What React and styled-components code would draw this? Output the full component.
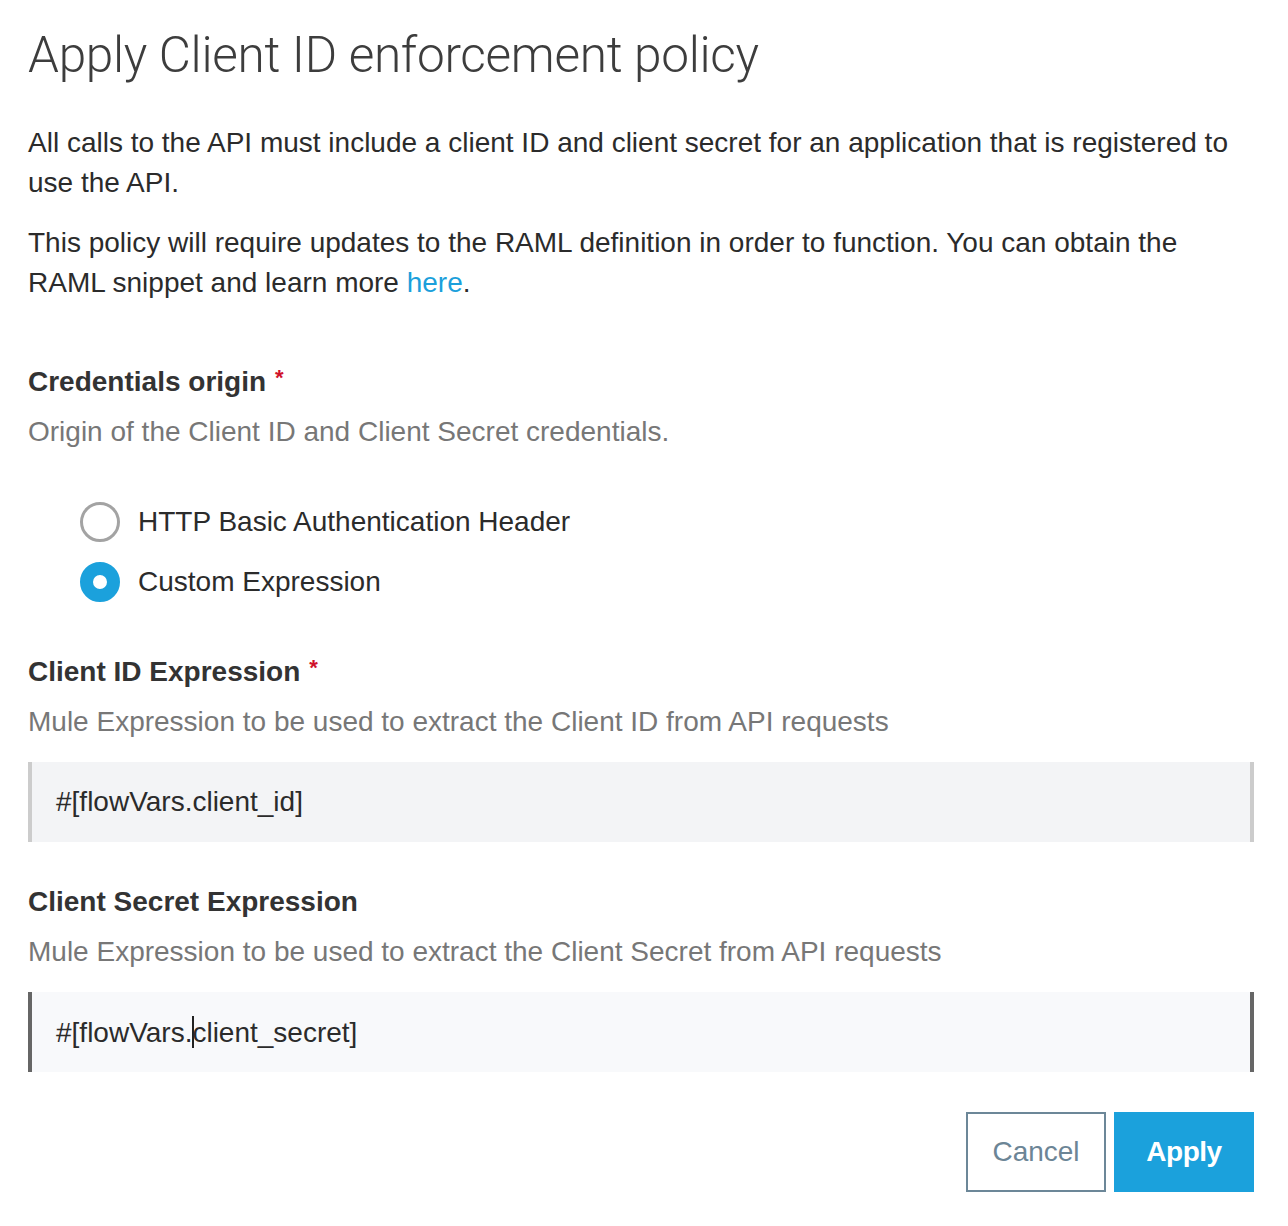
import React from "react";
import styled, { createGlobalStyle } from "styled-components";

const Global = createGlobalStyle`
  html, body { margin: 0; padding: 0; background: #fff; }
  body { font-family: "Liberation Sans", Arial, sans-serif; color: #333; }
  * { box-sizing: border-box; }
`;

const Page = styled.div`
  padding: 23px 34px 30px 28px;
  width: 1288px;
`;

const Title = styled.h1`
  margin: 0;
  font-family: Roboto, "Liberation Sans", sans-serif;
  font-weight: 300;
  font-size: 49.5px;
  line-height: 64px;
  color: #3d3d3d;
  letter-spacing: -0.3px;
`;

const Para = styled.p`
  margin: ${(p) => (p.$first ? "36px" : "20px")} 0 0;
  font-size: 28px;
  line-height: 40px;
  color: #2b2b2b;
`;

const Link = styled.a`
  color: #1b9fdb;
  text-decoration: none;
`;

const Label = styled.div`
  margin-top: ${(p) => p.$top}px;
  font-size: 28px;
  line-height: 40px;
  font-weight: 700;
  color: #333;
`;

const Star = styled.span`
  color: #d0112b;
  font-size: 22px;
  line-height: 0;
  vertical-align: 6px;
  margin-left: 9px;
`;

const Desc = styled.div`
  margin-top: 10px;
  font-size: 28px;
  line-height: 40px;
  color: #777;
`;

const RadioGroup = styled.div`
  margin-top: 40px;
  padding-left: 52px;
  display: flex;
  flex-direction: column;
`;

const RadioRow = styled.label`
  display: flex;
  align-items: center;
  height: 60px;
  gap: 18px;
  font-size: 28px;
  color: #2b2b2b;
`;

const RadioCircle = styled.span`
  width: 40px;
  height: 40px;
  border-radius: 50%;
  flex: none;
  border: ${(p) => (p.$on ? "13px solid #1ba1dc" : "3px solid #a3a3a3")};
  background: #fff;
`;

const Field = styled.div`
  margin-top: 20px;
  height: 80px;
  display: flex;
  align-items: center;
  padding-left: 24px;
  font-size: 28px;
  color: #2b2b2b;
  background: ${(p) => (p.$focus ? "#f8f9fb" : "#f3f4f6")};
  border-left: 4px solid ${(p) => (p.$focus ? "#666" : "#ccc")};
  border-right: 4px solid ${(p) => (p.$focus ? "#666" : "#ccc")};
`;

const Caret = styled.span`
  display: inline-block;
  width: 2px;
  height: 32px;
  margin: 0 -2px 0 0;
  background: #222;
  vertical-align: -6px;
`;

const Actions = styled.div`
  margin-top: 40px;
  display: flex;
  justify-content: flex-end;
  gap: 8px;
`;

const Button = styled.button`
  width: 140px;
  height: 80px;
  font-family: "Liberation Sans", Arial, sans-serif;
  font-size: 28px;
  cursor: pointer;
  border: 2px solid ${(p) => (p.$primary ? "#1ba1dc" : "#6c8798")};
  background: ${(p) => (p.$primary ? "#1ba1dc" : "#fff")};
  color: ${(p) => (p.$primary ? "#fff" : "#6c8596")};
  font-weight: ${(p) => (p.$primary ? 700 : 400)};
  letter-spacing: ${(p) => (p.$primary ? "-0.5px" : "0")};
`;

export default function App() {
  return (
    <>
      <Global />
      <Page>
        <Title>Apply Client ID enforcement policy</Title>
        <Para $first>
          All calls to the API must include a client ID and client secret for an application that is registered to
          use the API.
        </Para>
        <Para>
          This policy will require updates to the RAML definition in order to function. You can obtain the RAML
          snippet and learn more <Link href="#">here</Link>.
        </Para>

        <Label $top={59}>
          Credentials origin<Star>*</Star>
        </Label>
        <Desc>Origin of the Client ID and Client Secret credentials.</Desc>
        <RadioGroup>
          <RadioRow>
            <RadioCircle />
            HTTP Basic Authentication Header
          </RadioRow>
          <RadioRow>
            <RadioCircle $on />
            Custom Expression
          </RadioRow>
        </RadioGroup>

        <Label $top={40}>
          Client ID Expression<Star>*</Star>
        </Label>
        <Desc>Mule Expression to be used to extract the Client ID from API requests</Desc>
        <Field>#[flowVars.client_id]</Field>

        <Label $top={40}>Client Secret Expression</Label>
        <Desc>Mule Expression to be used to extract the Client Secret from API requests</Desc>
        <Field $focus>
          <span>
            #[flowVars.<Caret />client_secret]
          </span>
        </Field>

        <Actions>
          <Button>Cancel</Button>
          <Button $primary>Apply</Button>
        </Actions>
      </Page>
    </>
  );
}
